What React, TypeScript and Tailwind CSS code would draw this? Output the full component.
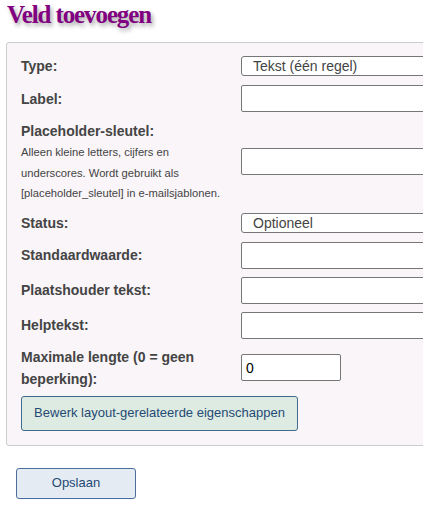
import React from 'react';

const label = 'block text-[14px] font-bold text-[#444] leading-[22px]';
const textInput =
  'block h-[27px] w-[260px] rounded-[2px] border border-[#767676] bg-white px-[4px] text-[14px] text-black outline-none';
const selectBox =
  'block h-[20px] w-[260px] appearance-none rounded-[3px] border border-[#767676] bg-white pl-[11px] text-[14px] leading-[18px] text-[#444] outline-none';

function Row({
  children,
  field,
  pad = 'py-[4px]',
}: {
  children: React.ReactNode;
  field: React.ReactNode;
  pad?: string;
}) {
  return (
    <tr>
      <td className={`w-[220px] ${pad} pr-[4px] align-middle text-[14px] leading-[22px]`}>{children}</td>
      <td className={`${pad} align-middle text-[14px] leading-[22px]`}>{field}</td>
    </tr>
  );
}

export default function App() {
  return (
    <div className="w-full overflow-hidden bg-white font-['Liberation_Sans',Arial,sans-serif]">
      <h1 className="ml-[7px] h-[35px] font-['Liberation_Serif','Times_New_Roman',serif] text-[25px] font-bold leading-[30px] tracking-[-1.1px] text-[#800080] [text-shadow:2px_3px_4px_rgba(0,0,0,0.35)]">
        Veld toevoegen
      </h1>
      <div className="ml-[6px] mt-[7px] w-[520px] rounded-[3px] border border-[#cccccc] bg-[#f9f5f8] px-[14px] pb-[14px] pt-[8px]">
        <table className="border-collapse">
          <tbody>
            <Row
              field={
                <select className={selectBox} defaultValue="text">
                  <option value="text">Tekst (één regel)</option>
                </select>
              }
            >
              <span className={label}>Type:</span>
            </Row>
            <Row field={<input type="text" className={textInput} />}>
              <span className={label}>Label:</span>
            </Row>
            <Row field={<input type="text" className={textInput} />}>
              <div className={label}>Placeholder-sleutel:</div>
              <p className="w-[204px] text-[11.2px] leading-[20.5px] text-[#444]">
                Alleen kleine letters, cijfers en underscores. Wordt gebruikt als [placeholder_sleutel] in
                e-mailsjablonen.
              </p>
            </Row>
            <Row
              field={
                <select className={selectBox} defaultValue="opt">
                  <option value="opt">Optioneel</option>
                </select>
              }
            >
              <span className={label}>Status:</span>
            </Row>
            <Row field={<input type="text" className={textInput} />}>
              <span className={label}>Standaardwaarde:</span>
            </Row>
            <Row field={<input type="text" className={textInput} />}>
              <span className={label}>Plaatshouder tekst:</span>
            </Row>
            <Row field={<input type="text" className={textInput} />}>
              <span className={label}>Helptekst:</span>
            </Row>
            <Row
              pad="py-[3px]"
              field={
                <input
                  type="text"
                  defaultValue="0"
                  className="block h-[27px] w-[100px] rounded-[2px] border border-[#767676] bg-white px-[4px] text-[14px] text-black outline-none"
                />
              }
            >
              <span className={`${label} w-[190px]`}>Maximale lengte (0 = geen beperking):</span>
            </Row>
          </tbody>
        </table>
        <button
          type="button"
          className="mt-[3px] block h-[35px] w-[277px] rounded-[3px] border border-[#3f6b8c] bg-[#deebe3] text-[13px] text-[#1f4a73]"
        >
          Bewerk layout-gerelateerde eigenschappen
        </button>
      </div>
      <button
        type="button"
        className="mb-[14px] ml-[16px] mt-[22px] block h-[31px] w-[120px] rounded-[3px] border border-[#4a70a0] bg-[#e4ebf3] text-[13px] text-[#1f4a73]"
      >
        Opslaan
      </button>
    </div>
  );
}
